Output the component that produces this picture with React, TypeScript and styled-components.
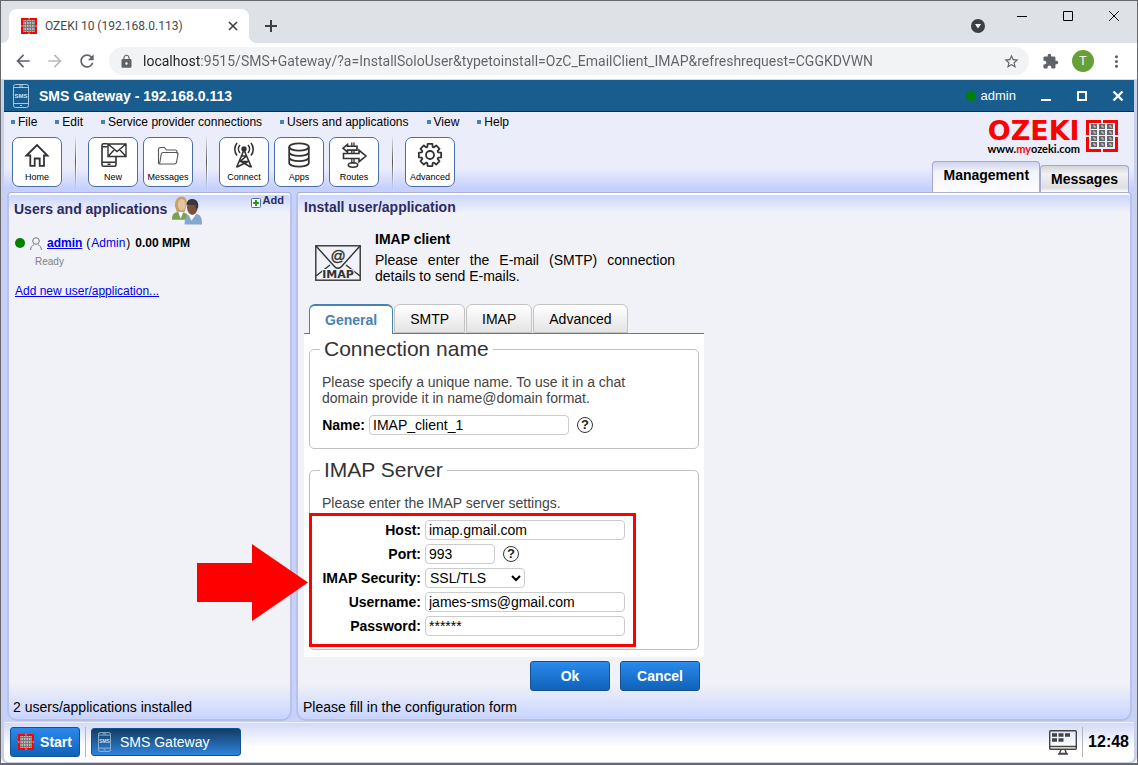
import React from 'react';
import styled, { createGlobalStyle, css } from 'styled-components';
import {
  MdArrowBack,
  MdArrowForward,
  MdExtension,
  MdLock,
  MdMoreVert,
  MdRefresh,
  MdStarBorder,
} from 'react-icons/md';

const ui = '"Liberation Sans", Arial, sans-serif';
const chromeFont = 'Roboto, "Segoe UI", sans-serif';

const GlobalStyle = createGlobalStyle`
  *, *::before, *::after { box-sizing: border-box; }
  body { margin: 0; font-family: ${ui}; font-size: 14px; color: #000; background: #fff; }
  h1, h2, p { margin: 0; }
  button, input, select { font-family: inherit; font-size: inherit; margin: 0; }
  svg { display: block; flex: none; }
  a { color: #0000ee; }
`;

/* ---------- browser window ---------- */

const Window = styled.div`
  min-height: 100vh;
  display: flex;
  flex-direction: column;
  border: 1px solid #66686b;
  border-bottom-width: 2px;
`;

const TabStrip = styled.div`
  height: 42px;
  display: flex;
  align-items: flex-end;
  background: #dee1e6;
  padding-left: 8px;
`;

const BrowserTab = styled.div`
  position: relative;
  width: 240px;
  height: 34px;
  display: flex;
  align-items: center;
  gap: 8px;
  padding: 0 10px 0 12px;
  background: #fff;
  border-radius: 8px 8px 0 0;
  font-family: ${chromeFont};
  font-size: 12px;
  color: #45494d;

  &::before, &::after {
    content: '';
    position: absolute;
    bottom: 0;
    width: 8px;
    height: 8px;
  }
  &::before { left: -8px; background: radial-gradient(circle at 0 0, transparent 8px, #fff 8px); }
  &::after { right: -8px; background: radial-gradient(circle at 100% 0, transparent 8px, #fff 8px); }
`;

const TabTitle = styled.span`
  flex: 1;
  white-space: nowrap;
`;

const PlainButton = styled.button`
  display: flex;
  align-items: center;
  justify-content: center;
  padding: 0;
  border: 0;
  background: none;
  color: #5f6368;
`;

const NewTabButton = styled(PlainButton)`
  width: 28px;
  height: 34px;
  margin-left: 8px;
  color: #3c4043;
`;

const WindowControls = styled.div`
  align-self: flex-start;
  display: flex;
  margin-left: auto;
`;

const WindowButton = styled(PlainButton)`
  width: 46px;
  height: 29px;
  color: #000;
`;

const TabSearch = styled(PlainButton)`
  width: 30px;
  height: 50px;
  margin-right: 6px;
`;

const AddressBar = styled.div`
  height: 37px;
  display: flex;
  align-items: center;
  padding: 0 11px 0 12px;
  background: #fff;
  border-bottom: 1px solid #d9dbe6;
`;

const NavButtons = styled.div`
  display: flex;
  gap: 12px;
  margin-right: 12px;
`;

const Omnibox = styled.label`
  flex: 1;
  height: 28px;
  display: flex;
  align-items: center;
  gap: 9px;
  padding: 0 9px 0 10px;
  border-radius: 14px;
  background: #f1f3f4;
  color: #5f6368;
`;

const UrlInput = styled.input`
  flex: 1;
  min-width: 0;
  padding: 0;
  border: 0;
  outline: 0;
  font-family: ${chromeFont};
  font-size: 14px;
  color: #5f6368;
  background: linear-gradient(90deg, #202124 57px, #5f6368 57px);
  background-clip: text;
  -webkit-background-clip: text;
  -webkit-text-fill-color: transparent;
`;

const BrowserActions = styled.div`
  display: flex;
  align-items: center;
  gap: 13px;
  margin-left: 13px;
`;

const Avatar = styled(PlainButton)`
  width: 22px;
  height: 22px;
  border-radius: 50%;
  background: #689f38;
  color: #fff;
  font-size: 12px;
`;

/* ---------- application frame ---------- */

const AppFrame = styled.div`
  flex: 1;
  display: flex;
  flex-direction: column;
  border: solid #c9d0ee;
  border-width: 0 3px 1px;
  border-radius: 0 0 6px 6px;
  background: #c7d1fb;
`;

const TitleBar = styled.header`
  height: 32px;
  display: flex;
  align-items: center;
  padding: 0 10px 0 9px;
  background: #195d8f;
  border-bottom: 1px solid #0d2c45;
  color: #fff;
`;

const AppTitle = styled.h1`
  flex: 1;
  margin-left: 10px;
  font-size: 14px;
`;

const Account = styled.span`
  display: flex;
  align-items: center;
  gap: 5px;
  margin-right: 24px;
  font-size: 13px;
`;

const Dot = styled.span<{ $size?: number }>`
  flex: none;
  width: ${(p) => p.$size ?? 10}px;
  height: ${(p) => p.$size ?? 10}px;
  border-radius: 50%;
  background: #008000;
`;

const TitleButtons = styled.div`
  display: flex;
  gap: 24px;
`;

const TitleButton = styled(PlainButton)`
  width: 12px;
  height: 20px;
  color: #fff;
`;

const AppHeader = styled.div`
  height: 80px;
  display: flex;
  justify-content: space-between;
  padding: 0 5px 0 7px;
  background: linear-gradient(#ecedfb 56px, #c6d0fd 76px);
`;

const MenuBar = styled.nav`
  display: flex;
  gap: 18px;
  height: 20px;
  align-items: center;
`;

const MenuItem = styled.button`
  display: flex;
  align-items: center;
  gap: 3px;
  padding: 0;
  border: 0;
  background: none;
  color: #000;
  font-size: 12px;
  white-space: nowrap;

  &::before {
    content: '';
    width: 4px;
    height: 4px;
    background: #4682b4;
  }
`;

const ToolBar = styled.div`
  display: flex;
  align-items: center;
  padding: 3px 0 0 1px;
`;

const ToolGroup = styled.div`
  display: flex;
  gap: 5px;
`;

const ToolSeparator = styled.span`
  width: 2px;
  height: 54px;
  margin: 0 11px 0 13px;
  background: linear-gradient(90deg, #555 50%, #fff 50%);
  mask-image: linear-gradient(transparent, #000 50%, transparent);
`;

const ToolButton = styled.button`
  width: 50px;
  height: 50px;
  display: flex;
  flex-direction: column;
  align-items: center;
  justify-content: space-between;
  padding: 3px 0;
  border: 1px solid #4a6ea5;
  border-radius: 7px;
  background: #fff;
  color: #000;
  font-size: 9px;
  line-height: 11px;
`;

const HeaderSide = styled.div`
  display: flex;
  flex-direction: column;
  align-items: flex-end;
  justify-content: space-between;
`;

const Logo = styled.a`
  display: flex;
  align-items: flex-start;
  gap: 6px;
  margin: 8px 11px 0 0;
  color: #f00;
  text-decoration: none;
`;

const LogoWords = styled.span`
  display: flex;
  flex-direction: column;
  align-items: center;
  height: 32px;
`;

const LogoName = styled.span`
  font: bold 27px/22px "DejaVu Sans", sans-serif;
`;

const LogoSite = styled.span`
  font: bold 11px/13px Lato, sans-serif;
  color: #000;

  em { color: #f00; font-style: normal; }
`;

const ViewTabs = styled.div`
  display: flex;
  align-items: flex-end;
`;

const ViewTab = styled.button<{ $active?: boolean }>`
  height: ${(p) => (p.$active ? 31 : 27)}px;
  padding: 0 10px ${(p) => (p.$active ? 4 : 0)}px;
  border: 1px solid #a3a8d2;
  border-bottom: 0;
  border-radius: 4px 4px 0 0;
  background: ${(p) =>
    p.$active
      ? 'linear-gradient(#cfd3ee, #f3f4fb 10px, #fdfdff)'
      : 'linear-gradient(#d4d5d9, #f1f1f3 8px, #dedfe2 22px, #fff)'};
  color: #000;
  font-size: 14px;
  font-weight: bold;
`;

/* ---------- panels ---------- */

const Panels = styled.main`
  flex: 1;
  display: grid;
  grid-template-columns: 285px minmax(0, 1fr);
  gap: 4px;
  padding: 0 2px 1px 3px;
`;

const Panel = styled.section<{ $inset?: number }>`
  display: flex;
  flex-direction: column;
  padding: 0 6px 0 ${(p) => p.$inset ?? 6}px;
  border: 1px solid #a9b1da;
  border-width: 1px 2px 2px;
  border-color: #a9b1da #b9c2ea #b5bee3;
  border-radius: 4px 4px 10px 10px;
  box-shadow: inset 0 2px #fff;
  background:
    linear-gradient(#c6d2ff, #f1f2f700 20px) no-repeat,
    linear-gradient(0deg, #c8d4ff, #f1f2f700 36px) no-repeat,
    #f1f2f7;
`;

const PanelHeader = styled.div`
  display: flex;
  align-items: flex-start;
  height: 38px;
`;

const PanelTitle = styled.h2<{ $top?: number }>`
  margin-right: 5px;
  padding-top: ${(p) => p.$top ?? 8}px;
  color: #2b2b66;
  font-size: 14px;
  line-height: 16px;
  white-space: nowrap;
`;

const PeopleWrap = styled.span`
  padding-top: 3px;
`;

const AddButton = styled(PlainButton)`
  gap: 2px;
  margin-left: auto;
  color: #2b2b66;
  font-size: 11px;
  line-height: 14px;
  font-weight: bold;
  align-items: flex-start;

  svg { margin-top: 5px; }
`;

const UserRow = styled.div`
  display: flex;
  align-items: center;
  gap: 5px;
  padding: 4px 0 0;
  margin-left: 1px;
  font-size: 12px;
  line-height: 16px;

  > a { font-weight: bold; }
`;

const UserKind = styled.span`
  margin-left: -1px;
  a { margin: 0 1px; text-decoration: none; }
`;

const UserState = styled.p`
  margin: 5px 0 15px 21px;
  color: #808080;
  font-size: 10px;
  line-height: 12px;
`;

const AddLink = styled.a`
  align-self: flex-start;
  margin-left: 1px;
  font-size: 12px;
  line-height: 16px;
`;

const PanelStatus = styled.p`
  margin-top: auto;
  padding: 5px 0 4px;
  line-height: 16px;
  margin-left: -1px;
`;

/* ---------- install form ---------- */

const Install = styled.form`
  width: 400px;
  display: flex;
  flex-direction: column;
`;

const Intro = styled.div`
  display: flex;
  gap: 14px;
  padding: 0 29px 20px 11px;

  svg { margin-top: 14px; }
`;

const IntroText = styled.div`
  line-height: 16px;
  p { margin-top: 5px; text-align: justify; }
`;

const FormTabs = styled.div`
  display: flex;
  gap: 1px;
  height: 30px;
  padding-left: 5px;
  border-bottom: 1px solid #4682b4;
`;

const FormTab = styled.button<{ $active?: boolean }>`
  height: 29px;
  padding: 0 15px;
  border: 1px solid #c4c4c4;
  border-radius: 6px 6px 0 0;
  background: linear-gradient(#fff, #e4e4e4);
  color: #000;
  font-size: 14px;

  ${(p) =>
    p.$active &&
    css`
      height: 30px;
      border: solid #4682b4;
      border-width: 2px 1px 0;
      background: #fff;
      color: #4682b4;
      font-weight: bold;
    `}
`;

const FormBody = styled.div`
  display: flex;
  flex-direction: column;
  gap: 8px;
  padding: 2px 5px 7px;
  background: #fff;
`;

const Group = styled.fieldset`
  min-width: 0;
  margin: 0;
  padding: 12px 12px 13px;
  border: 1px solid #c0c0c0;
  border-radius: 5px;

  legend {
    margin-left: -2px;
    padding: 0 4px;
    color: #333;
    font-size: 21px;
    line-height: 26px;
  }
`;

const GroupHint = styled.p`
  max-width: 320px;
  margin-bottom: 9px;
  color: #444;
  line-height: 16px;
`;

const Fields = styled.div`
  position: relative;
  display: grid;
  gap: 4px;
`;

const Field = styled.div<{ $wide?: boolean }>`
  display: flex;
  align-items: center;
  height: 20px;

  label {
    flex: none;
    width: ${(p) => (p.$wide ? 103 : 47)}px;
    padding-right: 4px;
    text-align: right;
    font-weight: bold;
    white-space: nowrap;
  }
`;

const TextInput = styled.input<{ $width?: number }>`
  width: ${(p) => p.$width ?? 200}px;
  height: 20px;
  padding: 0 3px;
  border: 1px solid #ccc;
  border-radius: 4px;
  background: #fff;
  color: #000;
`;

const SelectInput = styled.select`
  width: 100px;
  height: 20px;
  border: 1px solid #ccc;
  border-radius: 4px;
  background: #fff;
  color: #000;
`;

const HelpButton = styled.button`
  width: 16px;
  height: 16px;
  margin-left: 8px;
  padding: 0;
  border: 1px solid #333;
  border-radius: 50%;
  background: #fff;
  color: #222;
  font-size: 13px;
  font-weight: bold;
  line-height: 14px;
`;

const Highlight = styled.div`
  position: absolute;
  left: -13px;
  top: -7px;
  width: 327px;
  height: 134px;
  border: 3px solid #f00;
  pointer-events: none;
`;

const Pointer = styled.svg`
  position: absolute;
  left: -125px;
  top: 24px;
  pointer-events: none;
`;

const FormActions = styled.div`
  display: flex;
  justify-content: flex-end;
  gap: 10px;
  padding: 4px 4px 0 0;
`;

const BlueButton = styled.button`
  width: 80px;
  height: 30px;
  display: flex;
  align-items: center;
  justify-content: center;
  padding: 0;
  border: 1px solid #125192;
  border-radius: 3px;
  background: linear-gradient(#2b8aec, #0f62b8);
  color: #fff;
  font-size: 14px;
  font-weight: bold;
`;

/* ---------- task bar ---------- */

const TaskBar = styled.footer`
  height: 40px;
  display: flex;
  align-items: center;
  padding: 0 5px 1px 6px;
  border-radius: 0 0 5px 5px;
  background: linear-gradient(#d3daf8, #fff 24px);
  border-top: 1px solid #eef0fc;
`;

const StartButton = styled(BlueButton)`
  width: 70px;
  gap: 6px;
`;

const TaskSeparator = styled.span`
  width: 1px;
  height: 30px;
  margin: 0 5px;
  background: #b5b5b5;
`;

const TaskButton = styled(BlueButton)`
  width: 150px;
  height: 28px;
  justify-content: flex-start;
  gap: 9px;
  padding-left: 6px;
  background: linear-gradient(#143c60, #2d84e0);
  font-weight: normal;
`;

const Clock = styled.time`
  font-size: 16px;
  font-weight: bold;
`;

const Tray = styled.div`
  display: flex;
  align-items: center;
  margin-left: auto;
`;

/* ---------- drawings ---------- */

const OzekiMark = ({ size }: { size: number }) => (
  <svg width={size} height={size} viewBox="0 0 32 32">
    <path d="M0 0h15v3H3v12H0zM17 0h15v15h-3V3H17zM0 17h3v12h12v3H0zM29 17h3v15H17v-3h12z" fill="#f00" />
    {[0, 1, 2, 3].map((r) =>
      [0, 1, 2].map((c) => (
        <g key={`${r}${c}`}>
          <rect x={5 + c * 8} y={4 + r * 6} width="6" height="5" fill="#666" />
          <path d={`M${7 + c * 8} ${6 + r * 6}h2v2`} stroke="#ddd" fill="none" />
        </g>
      )),
    )}
  </svg>
);

const TabMark = () => (
  <svg width="16" height="16" viewBox="0 0 16 16">
    <path d="M0 0h16v16H0z" fill="#f00" />
    <path d="M2 2h12v12H2z" fill="#bbb" />
    <path d="M3 2v12M5.500 2v12M8 2v12M10.500 2v12M13 2v12M2 3.500h12M2 6.500h12M2 9.500h12M2 12.500h12" stroke="#777" />
    <path d="M8 0v1.500M8 14.500V16M0 8h1.500M14.500 8H16" stroke="#fbb" />
  </svg>
);

const PhoneSms = ({ width, height }: { width: number; height: number }) => (
  <svg width={width} height={height} viewBox="0 0 16 24" fill="none" stroke="#a9c8df">
    <rect x=".5" y=".5" width="15" height="23" rx="2" />
    <path d="M1 3.500h14M1 19.500h14M6 2h4M7 21.500h2" />
    <text x="8" y="13.500" textAnchor="middle" fontSize="6" fontWeight="bold" fontFamily="Liberation Sans" fill="#cfe0ee" stroke="none">
      SMS
    </text>
  </svg>
);

const iconProps = { width: 28, height: 28, viewBox: '0 0 28 28', fill: 'none', stroke: '#333' };

const HomeIcon = () => (
  <svg {...iconProps} strokeWidth="1.800">
    <path d="M3.500 14.500 14 4l10.500 10.500H21v10.300h-4.300v-7.300h-5v7.300H7.300V14.500z" />
  </svg>
);

const NewIcon = () => (
  <svg {...iconProps} strokeWidth="1.600">
    <path d="M8.500 2.800H4.500a1.500 1.500 0 0 0-1.500 1.500v19.400a1.500 1.500 0 0 0 1.500 1.500h11a1.500 1.500 0 0 0 1.500-1.500V16M3 5.800h5.500M3 21.200h14M8.500 23.200h3" />
    <path d="M9 3h18v12.500H9zM9 3l9 7.500L27 3M9 15.500l6.500-7M27 15.500l-6.500-7" strokeWidth="1.400" />
  </svg>
);

const FolderIcon = () => (
  <svg {...iconProps} strokeWidth="1.100" stroke="#555">
    <path d="M4.500 21V8.500a2 2 0 0 1 2-2h4l2 2.500h8.500a2 2 0 0 1 2 2v1.500M4.500 21a1.500 1.500 0 0 0 2 2h14c1 0 1.800-.6 2-1.600L24 13c.2-.8-.2-1.500-1-1.500H9c-1 0-1.600.6-1.800 1.500L6 21c-.2 1-1.500 1.200-1.500 0z" />
  </svg>
);

const AntennaIcon = () => (
  <svg {...iconProps} strokeWidth="1.600">
    <path d="M14 9 6.500 26.500M14 9l7.500 17.500M11.500 15h5M16.500 15l-6.500 5.500h9M9.500 19.500l11 6.500M7 26l12-6" />
    <circle cx="14" cy="8" r="1.900" fill="#333" />
    <path d="M10 12a6 6 0 0 1 0-8M18 12a6 6 0 0 0 0-8M7 14.500a10 10 0 0 1 0-12.500M21 14.500a10 10 0 0 0 0-12.500" />
  </svg>
);

const DatabaseIcon = () => (
  <svg {...iconProps} strokeWidth="1.800">
    <ellipse cx="14" cy="6" rx="9.800" ry="3.600" />
    <path d="M4.200 6v16c0 2 4.400 3.600 9.800 3.600s9.800-1.600 9.800-3.600V6M4.200 11.300c0 2 4.400 3.600 9.800 3.600s9.800-1.600 9.800-3.600M4.200 16.600c0 2 4.400 3.600 9.800 3.600s9.800-1.600 9.800-3.600" />
  </svg>
);

const RoutesIcon = () => (
  <svg {...iconProps} strokeWidth="1.600">
    <path d="M11.800 1.500V5M14 1.500V5M11.800 9.500v3M14 9.500v3M11.800 18v5M14 18v5" strokeWidth="1.300" />
    <path d="M7.500 5.300H17v3.800H7.500v2L3 7.200l4.500-3.800zM3.500 12.500h15.500V9.300l7 5.700-7 5.700v-3.200H3.500z" />
    <ellipse cx="13" cy="24" rx="4.700" ry="2.200" />
  </svg>
);

const teeth = Array.from({ length: 8 }, (_, i) => {
  const point = (radius: number, degrees: number) => {
    const angle = ((i * 45 + degrees) * Math.PI) / 180;
    return `${14 + radius * Math.sin(angle)} ${14 - radius * Math.cos(angle)}`;
  };
  return `${i ? 'L' : 'M'}${point(8.600, -18)}L${point(11.400, -12)}L${point(11.400, 12)}L${point(8.600, 18)}`;
}).join('');

const GearIcon = () => (
  <svg {...iconProps} strokeWidth="1.800" strokeLinejoin="round">
    <path d={`${teeth}z`} />
    <circle cx="14" cy="14" r="4" />
  </svg>
);

const PeopleIcon = () => (
  <svg width="31" height="30" viewBox="0 0 32 30">
    <path d="M0 24c0-6 2-8 8-8s9 2 9 8z" fill="#78a153" />
    <path d="M6 15l3 8 3-8z" fill="#fff" />
    <path d="M3 10C3 3 6 0 10 0s6 3 5 9l-2 7H5z" fill="#c4a566" />
    <ellipse cx="10" cy="8.500" rx="4" ry="6" fill="#e4c3a0" />
    <path d="M13 29c0-8 2-10 8-11 8-1 10 3 10 11z" fill="#82a8d2" />
    <path d="M17 18l3 7 5-7z" fill="#fff" />
    <ellipse cx="21" cy="11" rx="5.500" ry="8" fill="#7b5138" />
    <path d="M15 9c0-5 3-6.500 6-6.500s7 2 6 9l-2 2-1-5c-3 1-6-1-9 .5z" fill="#383838" />
  </svg>
);

const PlusIcon = () => (
  <svg width="10" height="10" viewBox="0 0 10 10">
    <rect x=".5" y=".5" width="9" height="9" rx="1" fill="#fff" stroke="#4a6ea5" />
    <path d="M5 2v6M2 5h6" stroke="#2c9a1c" strokeWidth="2" />
  </svg>
);

const PersonIcon = () => (
  <svg width="12" height="13" viewBox="0 0 12 13" fill="none" stroke="#777">
    <circle cx="6" cy="4" r="3.300" />
    <path d="M.6 13c0-3 1.500-4.300 3.400-5.300M11.400 13c0-3-1.500-4.300-3.400-5.300" />
  </svg>
);

const ImapIcon = () => (
  <svg width="46" height="36" viewBox="0 0 46 36" fill="none" stroke="#333" strokeWidth="1.400">
    <rect x=".8" y=".8" width="44.400" height="34.400" />
    <path d="M1 1l18 20c2.500 3 5.500 3 8 0L45 1M1 31l14-11M45 31L31 20" />
    <circle cx="23" cy="11" r="8.500" fill="#f1f2f7" stroke="none" />
    <text x="23" y="16" textAnchor="middle" fontFamily="Liberation Sans" fontSize="15" fill="#333" strokeWidth=".4">@</text>
    <text x="23" y="33" textAnchor="middle" fontFamily="DejaVu Sans" fontWeight="bold" fontSize="11" fill="#333" stroke="#f1f2f7" strokeWidth="2" paintOrder="stroke">IMAP</text>
  </svg>
);

const MonitorIcon = () => (
  <svg width="28" height="25" viewBox="0 0 28 25" fill="none" stroke="#444" strokeWidth="1.400">
    <rect x=".7" y=".7" width="26.600" height="18.600" rx="1" />
    <path d="M1 16.500h26M12 19.500l-1.500 4h7l-1.500-4M9 24h10" />
    <path d="M3 5h5M9.500 5h5M16 5h5M3 10h5M9.500 10h5" strokeWidth="3.500" />
  </svg>
);

const tools = [
  [{ label: 'Home', Icon: HomeIcon }],
  [
    { label: 'New', Icon: NewIcon },
    { label: 'Messages', Icon: FolderIcon },
  ],
  [
    { label: 'Connect', Icon: AntennaIcon },
    { label: 'Apps', Icon: DatabaseIcon },
    { label: 'Routes', Icon: RoutesIcon },
  ],
  [{ label: 'Advanced', Icon: GearIcon }],
];

const menus = ['File', 'Edit', 'Service provider connections', 'Users and applications', 'View', 'Help'];

const Browser = () => (
  <>
    <TabStrip>
      <BrowserTab>
        <TabMark />
        <TabTitle>OZEKI 10 (192.168.0.113)</TabTitle>
        <PlainButton aria-label="Close tab">
          <svg width="12" height="12" viewBox="0 0 12 12" stroke="#3c4043" strokeWidth="1.600">
            <path d="M2 2l8 8M10 2l-8 8" />
          </svg>
        </PlainButton>
      </BrowserTab>
      <NewTabButton aria-label="New tab">
        <svg width="12" height="12" viewBox="0 0 12 12" stroke="currentColor" strokeWidth="2">
          <path d="M6 0v12M0 6h12" />
        </svg>
      </NewTabButton>
      <WindowControls>
        <TabSearch aria-label="Search tabs">
          <svg width="14" height="14" viewBox="0 0 14 14">
            <circle cx="7" cy="7" r="7" fill="#3c4043" />
            <path d="M4 5h6l-3 4.500z" fill="#fff" />
          </svg>
        </TabSearch>
        <WindowButton aria-label="Minimize">
          <svg width="10" height="10" stroke="currentColor"><path d="M0 5.500h10" /></svg>
        </WindowButton>
        <WindowButton aria-label="Maximize">
          <svg width="10" height="10" stroke="currentColor" fill="none"><path d="M.5.5h9v9h-9z" /></svg>
        </WindowButton>
        <WindowButton aria-label="Close">
          <svg width="10" height="10" stroke="currentColor"><path d="M0 0l10 10M10 0L0 10" /></svg>
        </WindowButton>
      </WindowControls>
    </TabStrip>
    <AddressBar>
      <NavButtons>
        <PlainButton aria-label="Back"><MdArrowBack size={20} /></PlainButton>
        <PlainButton aria-label="Forward"><MdArrowForward size={20} color="#bababa" /></PlainButton>
        <PlainButton aria-label="Reload"><MdRefresh size={20} /></PlainButton>
      </NavButtons>
      <Omnibox>
        <MdLock size={15} />
        <UrlInput
          aria-label="Address"
          defaultValue="localhost:9515/SMS+Gateway/?a=InstallSoloUser&typetoinstall=OzC_EmailClient_IMAP&refreshrequest=CGGKDVWN"
        />
        <MdStarBorder size={17} />
      </Omnibox>
      <BrowserActions>
        <PlainButton aria-label="Extensions"><MdExtension size={17} /></PlainButton>
        <Avatar>T</Avatar>
        <PlainButton aria-label="Browser menu"><MdMoreVert size={19} /></PlainButton>
      </BrowserActions>
    </AddressBar>
  </>
);

const Header = () => (
  <>
    <TitleBar>
      <PhoneSms width={16} height={24} />
      <AppTitle>SMS Gateway - 192.168.0.113</AppTitle>
      <Account><Dot />admin</Account>
      <TitleButtons>
        <TitleButton aria-label="Minimize window">
          <svg width="12" height="12" stroke="currentColor" strokeWidth="2"><path d="M1 10h10" /></svg>
        </TitleButton>
        <TitleButton aria-label="Maximize window">
          <svg width="12" height="12" stroke="currentColor" strokeWidth="2" fill="none"><path d="M2 2h8v8H2z" /></svg>
        </TitleButton>
        <TitleButton aria-label="Close window">
          <svg width="12" height="12" stroke="currentColor" strokeWidth="2.400"><path d="M1.500 1.500l9 9M10.500 1.500l-9 9" /></svg>
        </TitleButton>
      </TitleButtons>
    </TitleBar>
    <AppHeader>
      <div>
        <MenuBar>
          {menus.map((m) => <MenuItem key={m}>{m}</MenuItem>)}
        </MenuBar>
        <ToolBar>
          {tools.map((group, i) => (
            <React.Fragment key={i}>
              {i > 0 && <ToolSeparator />}
              <ToolGroup>
                {group.map(({ label, Icon }) => (
                  <ToolButton key={label}><Icon />{label}</ToolButton>
                ))}
              </ToolGroup>
            </React.Fragment>
          ))}
        </ToolBar>
      </div>
      <HeaderSide>
        <Logo href="#ozeki">
          <LogoWords>
            <LogoName>OZEKI</LogoName>
            <LogoSite>www.<em>my</em>ozeki.com</LogoSite>
          </LogoWords>
          <OzekiMark size={32} />
        </Logo>
        <ViewTabs>
          <ViewTab $active>Management</ViewTab>
          <ViewTab>Messages</ViewTab>
        </ViewTabs>
      </HeaderSide>
    </AppHeader>
  </>
);

const UsersPanel = () => (
  <Panel $inset={5}>
    <PanelHeader>
      <PanelTitle>Users and applications</PanelTitle>
      <PeopleWrap><PeopleIcon /></PeopleWrap>
      <AddButton><PlusIcon />Add</AddButton>
    </PanelHeader>
    <UserRow>
      <Dot />
      <PersonIcon />
      <a href="#admin">admin</a>
      <UserKind>(<a href="#role">Admin</a>)</UserKind>
      <strong>0.00 MPM</strong>
    </UserRow>
    <UserState>Ready</UserState>
    <AddLink href="#new">Add new user/application...</AddLink>
    <PanelStatus>2 users/applications installed</PanelStatus>
  </Panel>
);

const InstallPanel = () => (
  <Panel>
    <PanelHeader>
      <PanelTitle $top={6}>Install user/application</PanelTitle>
    </PanelHeader>
    <Install>
      <Intro>
        <ImapIcon />
        <IntroText>
          <strong>IMAP client</strong>
          <p>Please enter the E-mail (SMTP) connection details to send E-mails.</p>
        </IntroText>
      </Intro>
      <FormTabs>
        <FormTab type="button" $active>General</FormTab>
        <FormTab type="button">SMTP</FormTab>
        <FormTab type="button">IMAP</FormTab>
        <FormTab type="button">Advanced</FormTab>
      </FormTabs>
      <FormBody>
        <Group>
          <legend>Connection name</legend>
          <GroupHint>
            Please specify a unique name. To use it in a chat domain provide it in name@domain format.
          </GroupHint>
          <Field>
            <label htmlFor="name">Name:</label>
            <TextInput id="name" defaultValue="IMAP_client_1" />
            <HelpButton type="button">?</HelpButton>
          </Field>
        </Group>
        <Group>
          <legend>IMAP Server</legend>
          <GroupHint>Please enter the IMAP server settings.</GroupHint>
          <Fields>
            <Field $wide>
              <label htmlFor="host">Host:</label>
              <TextInput id="host" defaultValue="imap.gmail.com" />
            </Field>
            <Field $wide>
              <label htmlFor="port">Port:</label>
              <TextInput id="port" $width={70} defaultValue="993" />
              <HelpButton type="button">?</HelpButton>
            </Field>
            <Field $wide>
              <label htmlFor="security">IMAP Security:</label>
              <SelectInput id="security" defaultValue="SSL/TLS">
                <option>SSL/TLS</option>
              </SelectInput>
            </Field>
            <Field $wide>
              <label htmlFor="username">Username:</label>
              <TextInput id="username" defaultValue="james-sms@gmail.com" />
            </Field>
            <Field $wide>
              <label htmlFor="password">Password:</label>
              <TextInput id="password" defaultValue="******" />
            </Field>
            <Highlight />
            <Pointer width="111" height="77" viewBox="0 0 111 77">
              <path d="M0 19h55V0l56 38.500L55 77V58H0z" fill="#f00" />
            </Pointer>
          </Fields>
        </Group>
      </FormBody>
      <FormActions>
        <BlueButton type="button">Ok</BlueButton>
        <BlueButton type="button">Cancel</BlueButton>
      </FormActions>
    </Install>
    <PanelStatus>Please fill in the configuration form</PanelStatus>
  </Panel>
);

const App = () => (
  <>
    <GlobalStyle />
    <Window>
      <Browser />
      <AppFrame>
        <Header />
        <Panels>
          <UsersPanel />
          <InstallPanel />
        </Panels>
        <TaskBar>
          <StartButton><TabMark />Start</StartButton>
          <TaskSeparator />
          <TaskButton><PhoneSms width={13} height={20} />SMS Gateway</TaskButton>
          <Tray>
            <MonitorIcon />
            <TaskSeparator />
            <Clock>12:48</Clock>
          </Tray>
        </TaskBar>
      </AppFrame>
    </Window>
  </>
);

export default App;
